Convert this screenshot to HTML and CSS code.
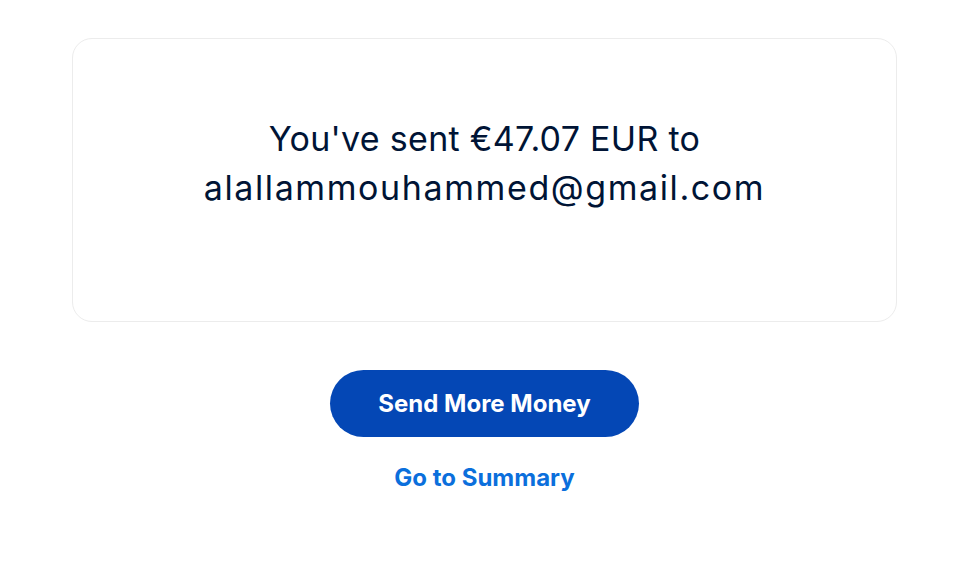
FILE: index.html
```html
<!DOCTYPE html>
<html lang="en">
<head>
    <meta charset="UTF-8">
    <meta name="viewport" content="width=device-width, initial-scale=1.0">
    <title>Payment sent</title>
    <link rel="stylesheet" href="styles.css">
</head>
<body>

    <!-- Confirmation card -->
    <div class="card">
        <h1 class="message">
            <span class="line">You've sent €47.07 EUR to</span>
            <span class="line email">alallammouhammed@gmail.com</span>
        </h1>
    </div>

    <div class="actions">
        <button class="btn">Send More Money</button>
        <a href="#" class="link">Go to Summary</a>
    </div>

</body>
</html>
```

FILE: styles.css
```css
body {
    font-family: Inter, "Liberation Sans", Arial, sans-serif;
    background-color: #fff;
    margin: 0;
    padding: 38px 72px 0 72px;
    color: #001435;
}

.card {
    height: 284px;
    border: 1px solid #ececec;
    border-radius: 20px;
    display: flex;
    justify-content: center;
    padding-top: 75px;
    box-sizing: border-box;
}

.message {
    margin: 0;
    font-size: 34px;
    font-weight: 400;
    line-height: 49px;
    text-align: center;
}

.line {
    display: block;
    letter-spacing: 0.3px;
}

.line.email {
    letter-spacing: 1.6px;
}

.actions {
    display: flex;
    flex-direction: column;
    align-items: center;
    margin-top: 48px;
}

.btn {
    background-color: #0447b5;
    color: #fff;
    border: none;
    width: 309px;
    height: 67px;
    border-radius: 34px;
    font-family: inherit;
    font-size: 24px;
    font-weight: 700;
    cursor: pointer;
}

.link {
    margin-top: 26px;
    color: #0b6fdc;
    font-size: 24px;
    font-weight: 700;
    text-decoration: none;
}
```
